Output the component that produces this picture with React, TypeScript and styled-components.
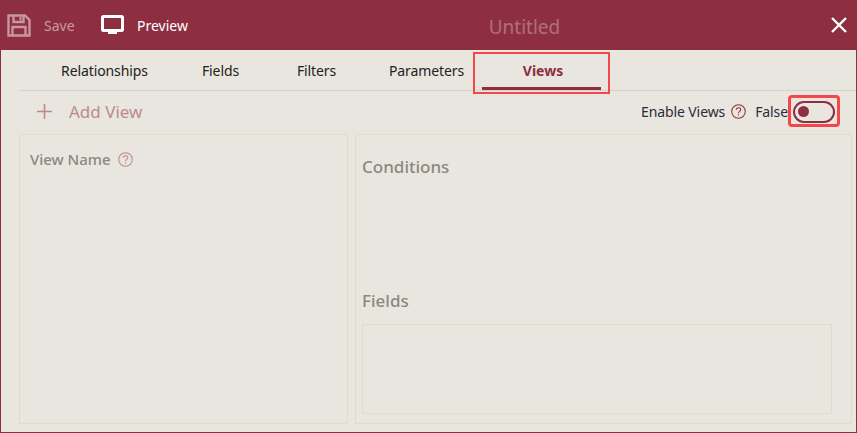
import React from "react";
import styled, { createGlobalStyle } from "styled-components";

const Global = createGlobalStyle`
  html, body { margin: 0; padding: 0; background: #e9e6df; }
  * { box-sizing: border-box; }
`;
const Win = styled.div`
  width: 857px; height: 433px; display: flex; flex-direction: column;
  background: #e9e6df; border: 1px solid #8e2e41; border-top: 0;
  font-family: "Noto Sans", "Open Sans", sans-serif; overflow: hidden; position: relative;
`;
const Header = styled.header`
  height: 50px; flex: none; background: #8e2e41; display: flex; align-items: center;
  padding: 0 8px 0 7px; position: relative; margin: 0 -1px;
`;
const HeadBtn = styled.div<{ $off?: boolean; $w: number; $gap: number }>`
  display: flex; align-items: center; width: ${p => p.$w}px; gap: ${p => p.$gap}px;
  color: #fff; opacity: ${p => (p.$off ? 0.5 : 1)}; font-size: 14px;
`;
const Title = styled.div`
  position: absolute; left: 0; right: 0; top: 14px; text-align: center; padding-left: 192px;
  font-size: 19px; line-height: 26px; color: #fff; opacity: 0.3;
`;
const Close = styled.svg`margin-left: auto; margin-right: 2px;`;
const Tabs = styled.nav`
  height: 41px; flex: none; margin-left: 18px; display: flex; padding-left: 11px;
  border-bottom: 1px solid #d5d2cb;
`;
const Tab = styled.div<{ $w: number; $active?: boolean }>`
  width: ${p => p.$w}px; height: 40px; display: flex; justify-content: center; padding-top: 11px;
  padding-left: ${p => (p.$active ? "3px" : "0")};
  font-size: 14px; line-height: 20px; letter-spacing: ${p => (p.$active ? "0" : "-0.1px")};
  color: ${p => (p.$active ? "#8e2e41" : "#222")}; font-weight: ${p => (p.$active ? 700 : 400)};
  border-bottom: ${p => (p.$active ? "3px solid #8e2e41" : "0")};
`;
const Toolbar = styled.div`
  height: 43px; flex: none; display: flex; align-items: center; padding: 0 21px 2px 36px;
`;
const AddView = styled.div`
  display: flex; align-items: center; gap: 17px; color: #8e2e41; opacity: 0.5; font-size: 17px;
`;
const Enable = styled.div`
  margin-left: auto; display: flex; align-items: center; font-size: 14px; color: #2b2b3a; letter-spacing: -0.1px;
`;
const HelpSlot = styled.span`display: inline-flex; margin: 0 9px 0 6px;`;
const Track = styled.div`
  width: 42px; height: 22px; border: 2px solid #8e2e41; border-radius: 11px; margin-left: 5px;
  padding: 3px; background: transparent;
`;
const Knob = styled.div`width: 11px; height: 11px; border-radius: 50%; background: #8e2e41;`;
const Panels = styled.div`
  display: flex; gap: 7px; height: 290px; padding: 0 4px 0 18px;
`;
const Panel = styled.section<{ $w?: number }>`
  border: 1px solid #e0ddd0; height: 290px;
  ${p => (p.$w ? `width: ${p.$w}px; flex: none;` : "flex: 1;")}
`;
const LeftPanel = styled(Panel)`padding: 14px 10px;`;
const RightPanel = styled(Panel)`padding: 20px 19px 0 6px; display: flex; flex-direction: column;`;
const NameLabel = styled.div`
  display: flex; align-items: center; gap: 7px; font-size: 15px; line-height: 20px; font-weight: 500; color: #8b8880;
`;
const Heading = styled.h3`
  margin: 0; font-size: 17px; line-height: 24px; font-weight: 500; color: #8b8880;
`;
const Spacer = styled.div`height: 110px; flex: none;`;
const FieldsBox = styled.div`height: 90px; margin-top: 11px; border: 1px solid #e0ddd0;`;
const Mark = styled.div`position: absolute; border: 2px solid #f4474b; pointer-events: none;`;
const TabMark = styled(Mark)`left: 472px; top: 52px; width: 137px; height: 42px;`;
const ToggleMark = styled(Mark)`left: 787px; top: 95px; width: 52px; height: 32px; border-width: 3px; border-radius: 4px;`;

const Help = ({ faded }: { faded?: boolean }) => (
  <svg width="15" height="15" viewBox="0 0 16 16" fill="none" stroke="#8e2e41" strokeWidth="1.1" opacity={faded ? 0.5 : 1}>
    <circle cx="8" cy="8" r="7.200" />
    <path d="M5.600 6.200C5.600 4.800 6.700 4 8 4s2.400.9 2.400 2.100c0 1.900-2.400 1.700-2.400 3.700" />
    <path d="M8 11v1.300" />
  </svg>
);

export default function App() {
  return (
    <>
      <Global />
      <Win>
        <Header>
          <HeadBtn $off $w={94} $gap={13}>
            <svg width="24" height="23" viewBox="0 0 24 23" fill="none" stroke="#fff" strokeWidth="2.400">
              <path d="M1.500 1.500h16.500l4.500 4.500v15.500H1.500z" />
              <path d="M6.500 2v6h10V2" />
              <path d="M13.500 3v3.500" strokeWidth="2" />
              <path d="M5.500 22v-9h13v9" />
            </svg>
            <span>Save</span>
          </HeadBtn>
          <HeadBtn $w={100} $gap={13}>
            <svg width="23" height="20" viewBox="0 0 23 20" fill="none">
              <rect x="1.500" y="1.500" width="20" height="14" rx="1" stroke="#fff" strokeWidth="3" />
              <rect x="7" y="17" width="9" height="2" fill="#fff" />
            </svg>
            <span>Preview</span>
          </HeadBtn>
          <Title>Untitled</Title>
          <Close width="16" height="16" viewBox="0 0 16 16" stroke="#fff" strokeWidth="2.400">
            <path d="M1 1l14 14M15 1L1 15" />
          </Close>
        </Header>
        <Tabs>
          <Tab $w={149}>Relationships</Tab>
          <Tab $w={83}>Fields</Tab>
          <Tab $w={109}>Filters</Tab>
          <Tab $w={111}>Parameters</Tab>
          <Tab $w={119} $active>Views</Tab>
        </Tabs>
        <Toolbar>
          <AddView>
            <svg width="15" height="15" viewBox="0 0 15 15" stroke="#8e2e41" strokeWidth="1.600"><path d="M7.500 0v15M0 7.500h15" /></svg>
            <span>Add View</span>
          </AddView>
          <Enable>
            <span>Enable Views</span>
            <HelpSlot><Help /></HelpSlot>
            <span>False</span>
            <Track><Knob /></Track>
          </Enable>
        </Toolbar>
        <Panels>
          <LeftPanel $w={329}>
            <NameLabel>View Name <Help faded /></NameLabel>
          </LeftPanel>
          <RightPanel>
            <Heading>Conditions</Heading>
            <Spacer />
            <Heading>Fields</Heading>
            <FieldsBox />
          </RightPanel>
        </Panels>
        <TabMark />
        <ToggleMark />
      </Win>
    </>
  );
}
